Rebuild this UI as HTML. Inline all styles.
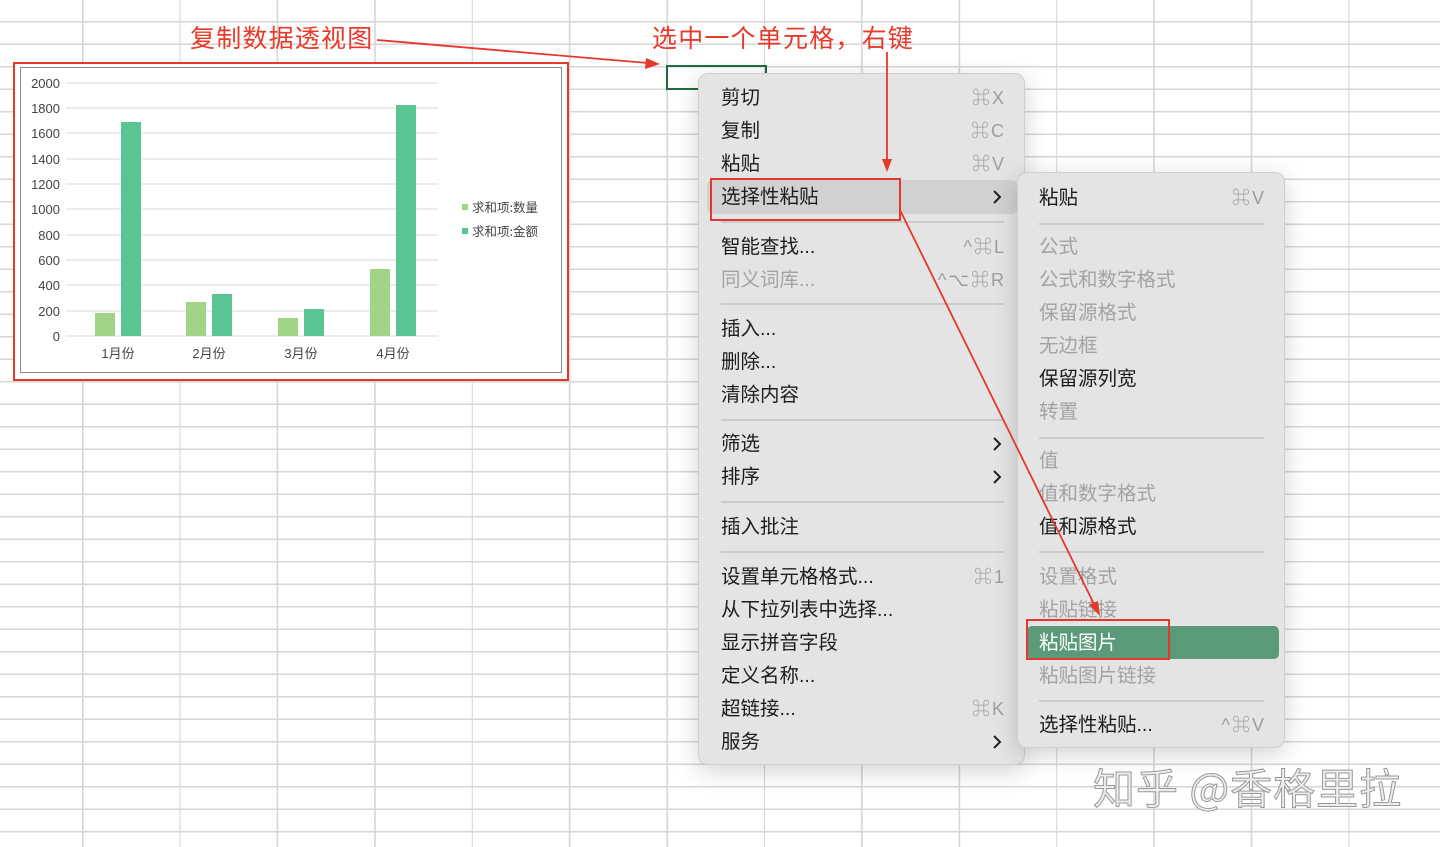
<!DOCTYPE html>
<html><head><meta charset="utf-8"><style>
*{margin:0;padding:0;box-sizing:border-box}
body{width:1440px;height:847px;overflow:hidden;position:relative;background:#fff;font-family:"Liberation Sans","Noto Sans CJK SC",sans-serif}
.grid{position:absolute;inset:0;
background-image:repeating-linear-gradient(to bottom,transparent 0,transparent 21px,#d6d6d6 21px,#d6d6d6 22.5px),
repeating-linear-gradient(to right,transparent 0,transparent 96px,#d6d6d6 96px,#d6d6d6 97.4px);
background-position:0 0,-14px 0}
.menu{position:absolute;background:#e4e4e4;border:1px solid #cfcfcf;border-radius:10px;box-shadow:0 6px 24px rgba(0,0,0,.18)}
.it{position:absolute;left:22px;font-size:19.5px;color:#1d1d1d;line-height:24px;white-space:nowrap}
.dis{color:#a3a3a3}
.sc{position:absolute;font-size:18px;color:#9d9d9d;line-height:24px;text-align:right;white-space:nowrap;letter-spacing:2px;margin-right:-2px}
.chev{position:absolute;width:10px;height:16px}
.sep{position:absolute;height:1.5px;background:#cbcbcb}
.ann{position:absolute;color:#e8392a;font-size:25px;letter-spacing:1.2px;line-height:28px;white-space:nowrap;font-family:"Noto Sans CJK SC",sans-serif}
</style></head><body>
<div class="grid"></div>

<div style="position:absolute;left:13px;top:62px;width:556px;height:319px;border:2px solid #e5372a;background:#fff"></div>
<svg style="position:absolute;left:0;top:0" width="600" height="400">
<rect x="20.5" y="67.5" width="541" height="305" fill="#fff" stroke="#8a8a8a" stroke-width="1"/>
<g stroke="#d9d9d9" stroke-width="1">
<line x1="66" x2="438" y1="83" y2="83"/><line x1="66" x2="438" y1="108" y2="108"/><line x1="66" x2="438" y1="133" y2="133"/><line x1="66" x2="438" y1="159" y2="159"/><line x1="66" x2="438" y1="184" y2="184"/><line x1="66" x2="438" y1="209" y2="209"/><line x1="66" x2="438" y1="235" y2="235"/><line x1="66" x2="438" y1="260" y2="260"/><line x1="66" x2="438" y1="285" y2="285"/><line x1="66" x2="438" y1="311" y2="311"/><line x1="66" x2="438" y1="336" y2="336"/>
</g>
<g font-family="Liberation Sans" font-size="13" fill="#444" text-anchor="end">
<text x="60" y="88">2000</text><text x="60" y="113">1800</text><text x="60" y="138">1600</text><text x="60" y="164">1400</text><text x="60" y="189">1200</text><text x="60" y="214">1000</text><text x="60" y="240">800</text><text x="60" y="265">600</text><text x="60" y="290">400</text><text x="60" y="316">200</text><text x="60" y="341">0</text>
</g>
<g fill="#a1d486"><rect x="95" y="313" width="20" height="23"/><rect x="186" y="302" width="20" height="34"/><rect x="278" y="318" width="20" height="18"/><rect x="370" y="269" width="20" height="67"/></g>
<g fill="#5bc493"><rect x="121" y="122" width="20" height="214"/><rect x="212" y="294" width="20" height="42"/><rect x="304" y="309" width="20" height="27"/><rect x="396" y="105" width="20" height="231"/></g>
<g font-family="Liberation Sans,Noto Sans CJK SC" font-size="13" fill="#444" text-anchor="middle">
<text x="118" y="358">1月份</text><text x="209" y="358">2月份</text><text x="301" y="358">3月份</text><text x="393" y="358">4月份</text>
</g>
<rect x="462" y="204" width="6" height="6" fill="#a1d486"/><rect x="462" y="228" width="6" height="6" fill="#5bc493"/>
<g font-family="Noto Sans CJK SC" font-size="12.5" fill="#444"><text x="472" y="212">求和项:数量</text><text x="472" y="236">求和项:金额</text></g>
</svg>

<div class="ann" style="left:190px;top:23px">复制数据透视图</div>
<div class="ann" style="left:652px;top:23px">选中一个单元格，右键</div>

<div style="position:absolute;left:666px;top:65px;width:101px;height:25px;border:2px solid #1f6b3d"></div>

<div class="menu" style="left:698px;top:73px;width:327px;height:692px">
<div style="position:absolute;left:8px;top:106px;width:310px;height:34px;background:#d1d1d1;border-radius:5px"></div>
<div class="it" style="top:12px">剪切</div><div class="sc" style="right:20px;top:12px">⌘X</div>
<div class="it" style="top:45px">复制</div><div class="sc" style="right:20px;top:45px">⌘C</div>
<div class="it" style="top:78px">粘贴</div><div class="sc" style="right:20px;top:78px">⌘V</div>
<div class="it" style="top:111px">选择性粘贴</div><svg class="chev" style="right:22px;top:115px" viewBox="0 0 10 16"><path d="M2 2l6 6-6 6" fill="none" stroke="#222" stroke-width="2"/></svg>
<div class="sep" style="left:22px;right:20px;top:147px"></div>
<div class="it" style="top:161px">智能查找...</div><div class="sc" style="right:20px;top:161px">^⌘L</div>
<div class="it dis" style="top:194px">同义词库...</div><div class="sc" style="right:20px;top:194px">^⌥⌘R</div>
<div class="sep" style="left:22px;right:20px;top:229px"></div>
<div class="it" style="top:243px">插入...</div>
<div class="it" style="top:276px">删除...</div>
<div class="it" style="top:309px">清除内容</div>
<div class="sep" style="left:22px;right:20px;top:345px"></div>
<div class="it" style="top:358px">筛选</div><svg class="chev" style="right:22px;top:362px" viewBox="0 0 10 16"><path d="M2 2l6 6-6 6" fill="none" stroke="#222" stroke-width="2"/></svg>
<div class="it" style="top:391px">排序</div><svg class="chev" style="right:22px;top:395px" viewBox="0 0 10 16"><path d="M2 2l6 6-6 6" fill="none" stroke="#222" stroke-width="2"/></svg>
<div class="sep" style="left:22px;right:20px;top:427px"></div>
<div class="it" style="top:441px">插入批注</div>
<div class="sep" style="left:22px;right:20px;top:477px"></div>
<div class="it" style="top:491px">设置单元格格式...</div><div class="sc" style="right:20px;top:491px">⌘1</div>
<div class="it" style="top:524px">从下拉列表中选择...</div>
<div class="it" style="top:557px">显示拼音字段</div>
<div class="it" style="top:590px">定义名称...</div>
<div class="it" style="top:623px">超链接...</div><div class="sc" style="right:20px;top:623px">⌘K</div>
<div class="it" style="top:656px">服务</div><svg class="chev" style="right:22px;top:660px" viewBox="0 0 10 16"><path d="M2 2l6 6-6 6" fill="none" stroke="#222" stroke-width="2"/></svg>
</div>

<div class="menu" style="left:1017px;top:172px;width:268px;height:576px">
<div style="position:absolute;left:9px;top:453px;width:252px;height:33px;background:#5a9a78;border-radius:5px"></div>
<div class="it" style="left:21px;top:13px">粘贴</div><div class="sc" style="right:20px;top:13px">⌘V</div>
<div class="sep" style="left:21px;right:20px;top:50px"></div>
<div class="it dis" style="left:21px;top:62px">公式</div>
<div class="it dis" style="left:21px;top:95px">公式和数字格式</div>
<div class="it dis" style="left:21px;top:128px">保留源格式</div>
<div class="it dis" style="left:21px;top:161px">无边框</div>
<div class="it" style="left:21px;top:194px">保留源列宽</div>
<div class="it dis" style="left:21px;top:227px">转置</div>
<div class="sep" style="left:21px;right:20px;top:264px"></div>
<div class="it dis" style="left:21px;top:276px">值</div>
<div class="it dis" style="left:21px;top:309px">值和数字格式</div>
<div class="it" style="left:21px;top:342px">值和源格式</div>
<div class="sep" style="left:21px;right:20px;top:378px"></div>
<div class="it dis" style="left:21px;top:392px">设置格式</div>
<div class="it dis" style="left:21px;top:425px">粘贴链接</div>
<div class="it" style="left:21px;top:458px;color:#fff">粘贴图片</div>
<div class="it dis" style="left:21px;top:491px">粘贴图片链接</div>
<div class="sep" style="left:21px;right:20px;top:527px"></div>
<div class="it" style="left:21px;top:540px">选择性粘贴...</div><div class="sc" style="right:20px;top:540px">^⌘V</div>
</div>

<svg style="position:absolute;left:0;top:0" width="1440" height="847">
<rect x="711" y="179" width="189" height="41" fill="none" stroke="#e5372a" stroke-width="2"/>
<rect x="1027" y="620" width="142" height="39" fill="none" stroke="#e5372a" stroke-width="2"/>
<g stroke="#e5372a" stroke-width="1.8" fill="#e5372a">
<line x1="377" y1="40" x2="648" y2="63"/><polygon points="660,64 646,58 645,69" stroke="none"/>
<line x1="887" y1="52" x2="887" y2="160"/><polygon points="887,172 882,159 892,159" stroke="none"/>
<line x1="900" y1="210" x2="1094" y2="604"/><polygon points="1100,616 1089,605 1098,601" stroke="none"/>
</g>
<text x="1093" y="804" font-family="Noto Sans CJK SC" font-size="42" letter-spacing="1" fill="#eeeeee" stroke="#9a9a9a" stroke-width="1">知乎 @香格里拉</text>
</svg>
</body></html>
